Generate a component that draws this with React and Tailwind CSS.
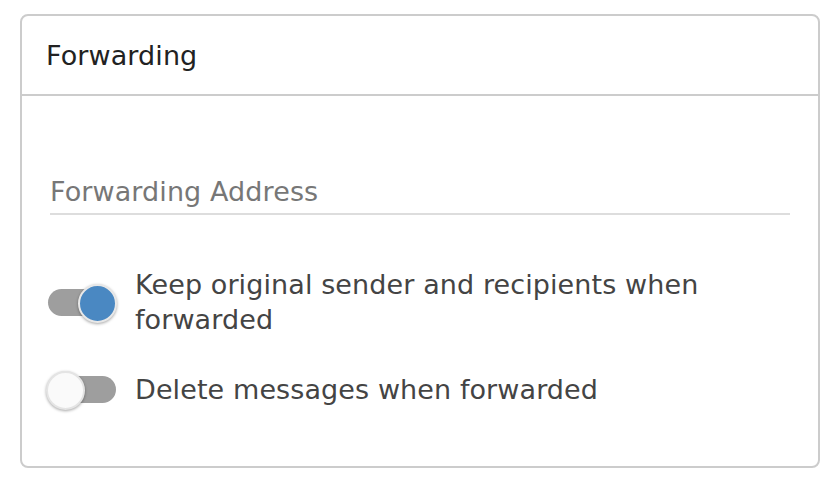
import { useState } from 'react'

function Toggle({ on, onChange }) {
  return (
    <button
      type="button"
      onClick={onChange}
      className="relative h-[35px] w-[71px] shrink-0"
    >
      <span className="absolute left-[2px] top-[4px] h-[27px] w-[68px] rounded-full bg-[#9e9e9e]" />
      <span
        className={
          on
            ? 'absolute left-[32px] top-[-1px] h-[39px] w-[39px] rounded-full border-2 border-[#e8e8e8] bg-[#4a88c2] shadow-[0_1px_3px_rgb(0_0_0/0.35)]'
            : 'absolute left-[0px] top-[-1px] h-[39px] w-[39px] rounded-full border-2 border-[#e4e4e4] bg-[#fafafa] shadow-[0_1px_3px_rgb(0_0_0/0.35)]'
        }
      />
    </button>
  )
}

export default function App() {
  const [keepSender, setKeepSender] = useState(true)
  const [deleteMsgs, setDeleteMsgs] = useState(false)

  return (
    <div className="h-[488px] w-[840px] bg-white px-[20px] pt-[14px] font-['DejaVu_Sans',sans-serif] tracking-[0.1px]">
      <div className="h-[454px] rounded-[8px] border-2 border-[#cccccc] bg-white">
        <div className="flex h-[80px] items-center border-b-2 border-[#cccccc] pl-[24px]">
          <h2 className="text-[27px] leading-[35px] text-[#222222]">Forwarding</h2>
        </div>
        <div className="px-[28px]">
          <div className="mt-[78px] border-b-2 border-[#dddddd] pb-[4px]">
            <input
              type="text"
              placeholder="Forwarding Address"
              className="w-full bg-transparent text-[27px] leading-[35px] tracking-[0.1px] text-[#333333] outline-none placeholder:text-[#777777]"
            />
          </div>
          <div className="-ml-[4px] mt-[52px] flex flex-col gap-[35px]">
            <div className="flex items-center gap-[18px]">
              <Toggle on={keepSender} onChange={() => setKeepSender(!keepSender)} />
              <span className="text-[27px] leading-[35px] text-[#444444]">
                Keep original sender and recipients when forwarded
              </span>
            </div>
            <div className="flex items-center gap-[18px]">
              <Toggle on={deleteMsgs} onChange={() => setDeleteMsgs(!deleteMsgs)} />
              <span className="text-[27px] leading-[35px] text-[#444444]">
                Delete messages when forwarded
              </span>
            </div>
          </div>
        </div>
      </div>
    </div>
  )
}
